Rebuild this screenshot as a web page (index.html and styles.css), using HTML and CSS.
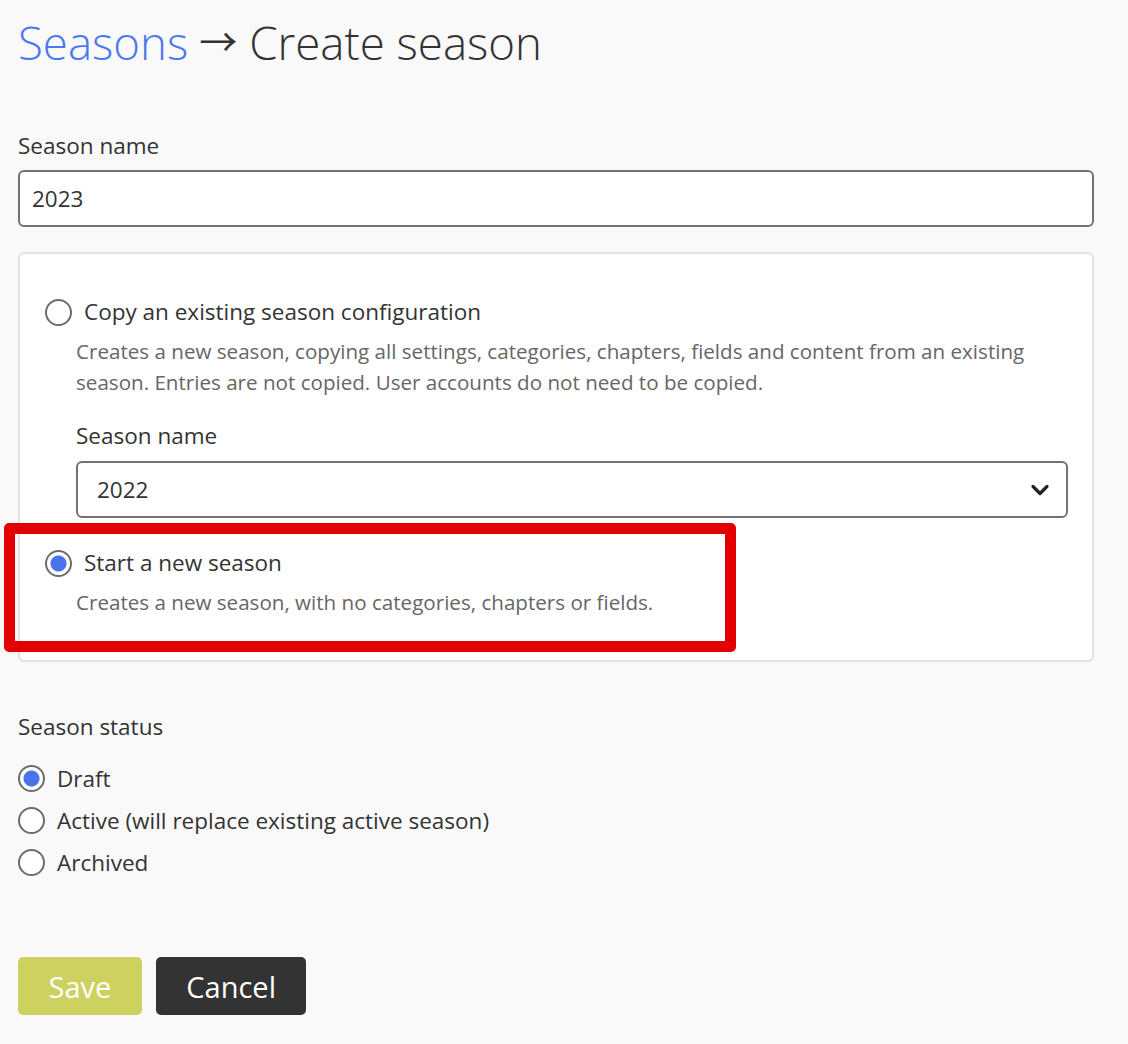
FILE: index.html
```html
<!DOCTYPE html>
<html lang="en">
<head>
<meta charset="utf-8">
<title>Create season</title>
<link rel="stylesheet" href="styles.css">
</head>
<body>
<main class="page">
  <h1 class="title"><a class="crumb" href="#">Seasons</a><span class="arrow">→</span>Create season</h1>

  <div class="field">
    <label class="field-label" for="name">Season name</label>
    <input class="text-input" id="name" type="text" value="2023">
  </div>

  <div class="panel">
    <div class="option">
      <label class="radio-row">
        <input class="radio" type="radio" name="mode">
        <span class="radio-text">Copy an existing season configuration</span>
      </label>
      <p class="help">Creates a new season, copying all settings, categories, chapters, fields and content from an existing season. Entries are not copied. User accounts do not need to be copied.</p>
      <div class="subfield">
        <label class="field-label" for="src">Season name</label>
        <div class="select" id="src">
          <span>2022</span>
          <svg class="chevron" width="20" height="14" viewBox="0 0 20 14" aria-hidden="true"><path d="M3 3.5 L10 10.5 L17 3.5" fill="none" stroke="#222" stroke-width="3.2" stroke-linecap="round" stroke-linejoin="round"/></svg>
        </div>
      </div>
    </div>

    <div class="option option-second">
      <label class="radio-row">
        <input class="radio" type="radio" name="mode" checked>
        <span class="radio-text">Start a new season</span>
      </label>
      <p class="help">Creates a new season, with no categories, chapters or fields.</p>
      <span class="highlight" aria-hidden="true"></span>
    </div>
  </div>

  <div class="status">
    <div class="field-label">Season status</div>
    <div class="status-list">
      <label class="status-row"><input class="radio" type="radio" name="status" checked><span>Draft</span></label>
      <label class="status-row"><input class="radio" type="radio" name="status"><span>Active (will replace existing active season)</span></label>
      <label class="status-row"><input class="radio" type="radio" name="status"><span>Archived</span></label>
    </div>
  </div>

  <div class="actions">
    <button class="btn btn-save" type="button">Save</button>
    <button class="btn btn-cancel" type="button">Cancel</button>
  </div>
</main>
</body>
</html>
```

FILE: styles.css
```css
* { box-sizing: border-box; }

html, body {
  margin: 0;
  background: #f9f9f9;
}

body {
  font-family: "Open Sans", "Noto Sans", "Liberation Sans", sans-serif;
  color: #333333;
  font-size: 22.5px;
}

.page {
  padding: 12px 34px 0 18px;
}

.title {
  display: flex;
  align-items: center;
  margin: 0 0 58px;
  font-size: 45.6px;
  line-height: 60px;
  font-weight: 300;
  color: #333333;
}

.crumb {
  color: #4a78ee;
  text-decoration: none;
}

.arrow {
  font-family: "Noto Sans CJK JP", "DejaVu Sans", sans-serif;
  font-weight: 400;
  font-size: 38px;
  line-height: 60px;
  margin: -4px 12px 0 11px;
  color: #333333;
}

.field-label {
  display: block;
  font-size: 22.5px;
  line-height: 30px;
  margin-bottom: 10px;
}

.field .field-label {
  padding-top: 1px;
  margin-bottom: 9px;
}

.text-input {
  display: block;
  width: 100%;
  height: 57px;
  margin: 0;
  padding: 0 12px;
  border: 2px solid #727272;
  border-radius: 6px;
  background: #ffffff;
  font-family: inherit;
  font-size: 22.5px;
  color: #333333;
  outline: none;
}

.panel {
  margin-top: 25px;
  background: #ffffff;
  border: 2px solid #e3e3e3;
  border-radius: 6px;
  padding: 43px 24px 42px 56px;
}

.option {
  position: relative;
}

.option-second {
  margin-top: 30px;
}

.radio-row {
  display: flex;
  align-items: center;
  gap: 12px;
  margin-left: -31px;
  line-height: 30px;
  font-size: 22.5px;
  color: #333333;
}

.radio {
  appearance: none;
  -webkit-appearance: none;
  flex: none;
  width: 27px;
  height: 27px;
  margin: 0;
  border: 2px solid #6c6c6c;
  border-radius: 50%;
  background: #ffffff;
}

.radio:checked {
  background: radial-gradient(circle, #4a72ea 0 7.5px, #ffffff 8.5px);
}

.help {
  margin: 9px 0 0;
  font-size: 20.6px;
  line-height: 31px;
  color: #666666;
}

.subfield {
  margin-top: 23px;
}

.select {
  display: flex;
  align-items: center;
  justify-content: space-between;
  height: 57px;
  padding: 0 16px 0 19px;
  border: 2px solid #727272;
  border-radius: 6px;
  background: #ffffff;
  font-size: 22.5px;
  color: #333333;
}

.chevron {
  display: block;
}

.highlight {
  position: absolute;
  top: -25px;
  left: -72px;
  right: 332px;
  bottom: -34px;
  border: 11px solid #e30000;
  border-radius: 5px;
  pointer-events: none;
}

.status {
  margin-top: 50px;
}

.status .field-label {
  margin-bottom: 15px;
}

.status-list {
  display: flex;
  flex-direction: column;
}

.status-row {
  display: flex;
  align-items: center;
  gap: 12px;
  height: 42px;
  font-size: 22.5px;
  color: #333333;
}

.actions {
  display: flex;
  gap: 14px;
  margin-top: 74px;
}

.btn {
  height: 58px;
  padding: 0 30.5px;
  border: 0;
  border-radius: 5px;
  font-family: inherit;
  font-size: 29px;
  color: #ffffff;
}

.btn-save {
  background: #cdd15f;
}

.btn-cancel {
  background: #333333;
}
```
